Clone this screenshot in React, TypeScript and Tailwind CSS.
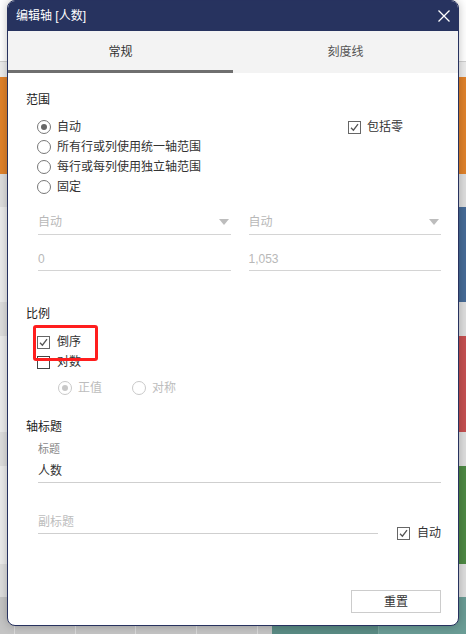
import React from "react";

const Check = () => (
    <svg viewBox="0 0 13 13" className="h-[13px] w-[13px]">
        <rect x="0.5" y="0.5" width="12" height="12" fill="#fff" stroke="#666" />
        <path d="M3 6.8 L5.4 9.2 L10 3.2" fill="none" stroke="#555" strokeWidth="1.3" />
    </svg>
);

const Box = () => (
    <svg viewBox="0 0 13 13" className="h-[13px] w-[13px]">
        <rect x="0.5" y="0.5" width="12" height="12" fill="#fff" stroke="#444" />
    </svg>
);

const Radio: React.FC<{ on?: boolean; off?: boolean }> = ({ on, off }) => (
    <svg viewBox="0 0 14 14" className="h-[14px] w-[14px]">
        <circle cx="7" cy="7" r="6.5" fill="#fff" stroke={off ? "#c8c8c8" : "#777"} />
        {on && <circle cx="7" cy="7" r="3" fill={off ? "#c8c8c8" : "#666"} />}
    </svg>
);

const Arrow = () => (
    <svg viewBox="0 0 10 6" className="h-[6px] w-[10px]">
        <path d="M0 0 L10 0 L5 6 Z" fill="#bdbdbd" />
    </svg>
);

const App: React.FC = () => {
    return (
        <div className="relative h-[634px] w-[466px] overflow-hidden bg-[#ececec] font-['Liberation_Sans','Noto_Sans_CJK_SC',sans-serif]">
            {/* page behind the dialog */}
            <div className="flex h-full flex-col">
                <div className="h-[62px] border-b border-[#cfcfcf] bg-white" />
                <div className="h-[15px]" />
                <div className="h-[97px] bg-[#e0822b]" />
                <div className="h-[33px] bg-[#dedede]" />
                <div className="ml-[300px] h-[95px] bg-[#466b97]" />
                <div className="h-[34px] bg-[#dedede]" />
                <div className="ml-[300px] h-[96px] bg-[#c55051]" />
                <div className="h-[34px] bg-[#dedede]" />
                <div className="ml-[300px] h-[98px] bg-[#4e8944]" />
                <div className="h-[33px] bg-[#dedede]" />
                <div className="flex flex-1">
                    <div className="flex w-[272px] bg-[#c4c4c4]">
                        <div className="w-[14px]" />
                        <div className="w-[61px] border-l border-[#dadada]" />
                        <div className="w-[60px] border-l border-[#dadada]" />
                        <div className="w-[61px] border-l border-[#dadada]" />
                        <div className="w-[61px] border-l border-[#dadada]" />
                        <div className="flex-1 border-l border-[#dadada]" />
                    </div>
                    <div className="flex flex-1 bg-[#5a8b84]">
                        <div className="w-[106px]" />
                        <div className="flex-1 border-l border-[#7aa59e] bg-[#6a9c95]" />
                    </div>
                </div>
            </div>

            {/* dialog */}
            <div className="absolute left-[7px] top-0 flex h-[626px] w-[452px] flex-col overflow-hidden rounded-[8px] border border-[#27325f] bg-white shadow-[0_0_10px_rgba(0,0,0,0.25)]">
                <div className="flex h-[30px] shrink-0 items-center justify-between bg-[#27335f] pl-[8px] pr-[8px] text-[12px] text-white">
                    <span>编辑轴 [人数]</span>
                    <svg viewBox="0 0 12 12" className="h-[12px] w-[12px]">
                        <path d="M0.5 0.5 L11.5 11.5 M11.5 0.5 L0.5 11.5" stroke="#fff" strokeWidth="1.3" />
                    </svg>
                </div>

                <div className="flex h-[42px] shrink-0 bg-[#f3f3f3] text-[12px]">
                    <div className="flex flex-1 flex-col">
                        <div className="flex flex-1 items-center justify-center pt-[2px] text-[#333]">常规</div>
                        <div className="h-[3px] bg-[#6f6f6f]" />
                    </div>
                    <div className="flex flex-1 items-center justify-center pb-[1px] text-[#555]">刻度线</div>
                </div>

                <div className="flex flex-1 flex-col pl-[18px] pr-[17px] text-[12px] text-[#333]">
                    <div className="mt-[17px] leading-[20px] text-[#222]">范围</div>

                    <div className="mt-[7px] flex">
                        <div className="ml-[11px] flex flex-col">
                            {[
                                ["自动", true],
                                ["所有行或列使用统一轴范围", false],
                                ["每行或每列使用独立轴范围", false],
                                ["固定", false],
                            ].map(([t, on]) => (
                                <div key={t as string} className="flex h-[20px] items-center gap-[6px]">
                                    <Radio on={on as boolean} />
                                    <span>{t as string}</span>
                                </div>
                            ))}
                        </div>
                        <div className="ml-auto mr-[38px] flex h-[20px] items-center gap-[6px]">
                            <Check />
                            <span>包括零</span>
                        </div>
                    </div>

                    <div className="ml-[12px] mt-[13px] flex gap-[18px] text-[#b8b8b8]">
                        <div className="flex h-[25px] flex-1 items-center justify-between border-b border-[#d4d4d4] pr-[2px]">
                            <span>自动</span>
                            <Arrow />
                        </div>
                        <div className="flex h-[25px] flex-1 items-center justify-between border-b border-[#d4d4d4] pr-[2px]">
                            <span>自动</span>
                            <Arrow />
                        </div>
                    </div>
                    <div className="ml-[12px] mt-[12px] flex gap-[18px] text-[#b8b8b8]">
                        <div className="flex h-[24px] flex-1 items-center border-b border-[#d4d4d4]">0</div>
                        <div className="flex h-[24px] flex-1 items-center border-b border-[#d4d4d4]">1,053</div>
                    </div>

                    <div className="mt-[33px] leading-[20px] text-[#222]">比例</div>
                    <div className="relative ml-[11px] mt-[8px] flex flex-col">
                        <div className="flex h-[20px] items-center gap-[7px]">
                            <Check />
                            <span>倒序</span>
                        </div>
                        <div className="flex h-[20px] items-center gap-[7px]">
                            <Box />
                            <span>对数</span>
                        </div>
                        <div className="pointer-events-none absolute left-[-4px] top-[-7px] h-[36px] w-[65px] rounded-[3px] border-[3px] border-[#ff1e1e]" />
                    </div>
                    <div className="ml-[32px] mt-[6px] flex h-[20px] items-center text-[#bdbdbd]">
                        <Radio on off />
                        <span className="ml-[6px]">正值</span>
                        <span className="ml-[30px]"><Radio off /></span>
                        <span className="ml-[6px]">对称</span>
                    </div>

                    <div className="mt-[19px] leading-[20px] text-[#222]">轴标题</div>
                    <div className="ml-[12px] mt-[5px] text-[11px] leading-[14px] text-[#888]">标题</div>
                    <div className="ml-[12px] mt-[6px] h-[21px] border-b border-[#cfcfcf] leading-[19px]">人数</div>

                    <div className="ml-[12px] mt-[29px] flex items-start">
                        <div className="h-[22px] flex-1 border-b border-[#cfcfcf] leading-[20px] text-[#bdbdbd]">副标题</div>
                        <div className="ml-[19px] mt-[14px] flex items-center gap-[7px]">
                            <Check />
                            <span className="leading-[14px]">自动</span>
                        </div>
                    </div>

                    <div className="flex-1" />
                    <div className="mb-[12px] flex justify-end">
                        <div className="flex h-[23px] w-[90px] items-center justify-center border border-[#cccccc] text-[#333]">重置</div>
                    </div>
                </div>
            </div>
        </div>
    );
};

export default App;
